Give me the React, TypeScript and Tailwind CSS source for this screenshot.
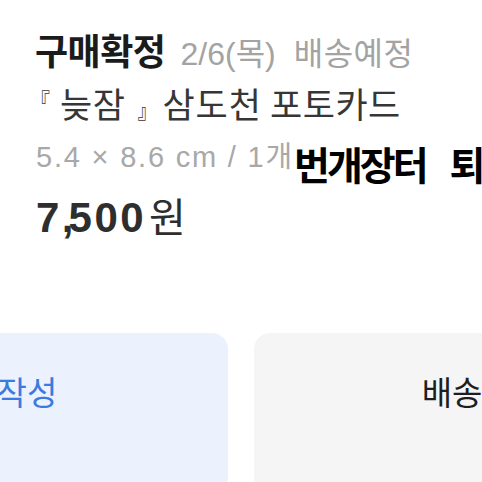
const font = { fontFamily: '"Liberation Sans", "Noto Sans CJK KR", sans-serif' };

export default function App() {
  return (
    <div className="relative w-[482px] h-[482px] overflow-hidden bg-white" style={font}>
      {/* order info */}
      <div className="pl-[36px] pt-[31px]">
        {/* status row */}
        <div className="flex items-baseline h-[44px] leading-[44px] whitespace-nowrap">
          <span className="ml-[-1px] text-[36px] font-bold text-[#1b1b1b] tracking-[-0.5px]">구매확정</span>
          <span className="ml-[15px] text-[32px] text-[#a3a3a3]">2/6(목)</span>
          <span className="ml-[18px] text-[32px] text-[#a3a3a3] tracking-[0.5px]">배송예정</span>
        </div>

        {/* product name */}
        <div className="mt-[9px] flex items-start h-[44px] whitespace-nowrap text-[#363636]">
          <span className="ml-[-6px] mt-[7px] text-[20px] leading-[20px] w-[20px]">『</span>
          <span className="ml-[10px] text-[35px] leading-[44px] tracking-[0.5px]">늦잠</span>
          <span className="ml-[12px] mt-[18px] text-[20px] leading-[20px] w-[20px]">』</span>
          <span className="ml-[5px] text-[35px] leading-[44px] tracking-[1px]">삼도천</span>
          <span className="ml-[8px] text-[35px] leading-[44px] tracking-[0.5px]">포토카드</span>
        </div>

        {/* option */}
        <div className="mt-[8px] h-[42px] leading-[42px] text-[29px] text-[#a8a8a8] tracking-[1.8px] whitespace-nowrap">
          5.4 × 8.6 cm / 1개
        </div>

        {/* price */}
        <div className="mt-[14px] flex items-baseline h-[52px] leading-[52px] text-[#2e2e2e] whitespace-nowrap">
          <span className="text-[42px] font-bold tracking-[2.5px]">
            7<span className="tracking-[-5px]">,</span>500
          </span>
          <span className="ml-[3px] text-[40px]">원</span>
        </div>
      </div>

      {/* overlay caption */}
      <div className="absolute left-[294px] top-[138px] flex text-[39px] font-bold text-black tracking-[-3px] whitespace-nowrap">
        <span>번개장터</span>
        <span className="ml-[24px]">퇴</span>
      </div>

      {/* action buttons */}
      <div className="mt-[89px] ml-[-244px] flex gap-[26px] whitespace-nowrap">
        <div className="w-[472px] h-[160px] shrink-0 rounded-[16px] bg-[#ebf2fd] flex justify-center pt-[36px] text-[33px] text-[#3a7be0]">
          후기 작성
        </div>
        <div className="w-[466px] h-[160px] shrink-0 rounded-[16px] bg-[#f5f5f6] flex justify-center pt-[36px] text-[33px] text-[#1e1e1e]">
          배송 조회
        </div>
      </div>
    </div>
  );
}
